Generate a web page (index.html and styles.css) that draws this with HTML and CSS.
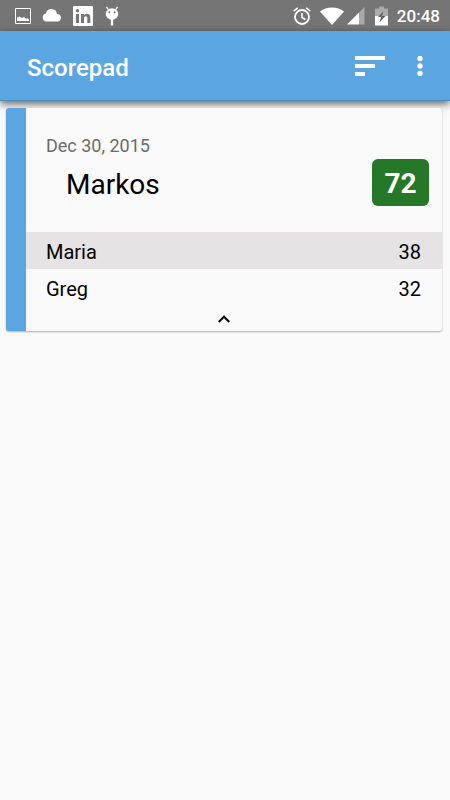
FILE: index.html
```html
<!DOCTYPE html>
<html lang="en">
<head>
<meta charset="utf-8">
<meta name="viewport" content="width=device-width, initial-scale=1">
<title>Scorepad</title>
<link rel="stylesheet" href="styles.css">
</head>
<body>
<div class="status-bar">
  <div class="notifications">
    <svg width="16" height="16" viewBox="0 0 16 16" aria-hidden="true"><path fill="none" stroke="#fff" d="M.5.5h15v15H.5z"/><path fill="#fff" d="M2 13V9.500L4.500 8.500 7 10l2-1 2 1.500h2l1 1V13z"/></svg>
    <svg width="20" height="20" viewBox="0 0 20 20" aria-hidden="true"><path fill="#fff" d="M4.500 15.500a4 4 0 0 1-.6-7.900A5.600 5.600 0 0 1 15 8a3.800 3.800 0 0 1 1 7.500z"/></svg>
    <svg width="20" height="20" viewBox="0 0 20 20" aria-hidden="true"><rect width="20" height="20" rx="1" fill="#fff"/><path fill="#757575" d="M3 8h3v9H3zM8 8h3v1.400c.6-1 1.600-1.600 3-1.600 2.400 0 3.300 1.500 3.300 4V17h-3v-4.600c0-1.400-.3-2.200-1.500-2.200S11 11.100 11 12.400V17H8z"/><circle cx="4.500" cy="4.800" r="1.700" fill="#757575"/></svg>
    <svg width="16" height="20" viewBox="0 0 16 20" aria-hidden="true"><path fill="none" stroke="#fff" stroke-width="1.300" d="M2.500.8 4.500 4M13.500.8 11.500 4"/><ellipse cx="8" cy="8" rx="6.300" ry="5.800" fill="#fff"/><path fill="#fff" d="M6.800 13h2.400v6.500H6.800z"/><circle cx="5.300" cy="6.200" r="1" fill="#757575"/><circle cx="10.700" cy="6.200" r="1" fill="#757575"/></svg>
  </div>
  <div class="system">
    <svg width="18" height="18" viewBox="0 0 18 18" aria-hidden="true"><g fill="none" stroke="#fff"><circle cx="9" cy="10" r="7" stroke-width="1.800"/><path stroke-width="1.600" d="M9 6v4.500l3.300 2M.6 4.200 4.800.8M13.200.8l4.200 3.400"/></g></svg>
    <svg class="wifi" width="24" height="18" viewBox="0 0 24 18" aria-hidden="true"><path fill="#fff" d="M0 4.500Q5 .5 12 .5t12 4L12 18z"/></svg>
    <svg width="18" height="18" viewBox="0 0 18 18" aria-hidden="true"><path fill="#aaa" d="M12 5.500 17.500 0v17.500H12z"/><path fill="#fff" d="M0 17.500 12 5.500v12z"/></svg>
    <svg class="battery" width="13" height="20" viewBox="0 0 13 20" aria-hidden="true"><path fill="#aaa" d="M0 2.500h4V.5h5v2h4V10H0z"/><path fill="#fff" d="M0 10h13v9.500H0z"/><path fill="#666" d="M8.500 5 3 11h3L4.500 16.500l6-6.500H7.200z"/></svg>
    <time class="clock">20:48</time>
  </div>
</div>
<header class="app-bar">
  <h1 class="title">Scorepad</h1>
  <button class="icon-button sort" type="button" aria-label="Sort"><svg width="30" height="20" viewBox="0 0 30 20"><path fill="#fff" d="M0 0h30v4H0zM0 8h20v4H0zM0 16h10v4H0z"/></svg></button>
  <button class="icon-button more" type="button" aria-label="More options"><svg width="6" height="20" viewBox="0 0 6 20"><g fill="#fff"><circle cx="3" cy="2.500" r="2.700"/><circle cx="3" cy="10" r="2.700"/><circle cx="3" cy="17.500" r="2.700"/></g></svg></button>
</header>
<main class="content">
  <article class="card">
    <div class="summary">
      <time class="date" datetime="2015-12-30">Dec 30, 2015</time>
      <div class="leader">
        <h2 class="name">Markos</h2>
        <span class="badge">72</span>
      </div>
    </div>
    <table class="scores">
      <tbody>
        <tr><th scope="row">Maria</th><td>38</td></tr>
        <tr><th scope="row">Greg</th><td>32</td></tr>
      </tbody>
    </table>
    <button class="collapse" type="button" aria-label="Collapse"><svg width="12" height="8" viewBox="0 0 12 8"><path fill="none" stroke="#000" stroke-width="2" d="M.7 7 6 1.700 11.300 7"/></svg></button>
  </article>
</main>
</body>
</html>
```
FILE: styles.css
```css
* { box-sizing: border-box; }
body {
  margin: 0;
  background: #fafafa;
  color: #000;
  font-family: Roboto, "Liberation Sans", sans-serif;
}
svg { display: block; flex: none; }
button { border: 0; padding: 0; background: none; cursor: pointer; }
h1, h2 { margin: 0; }

.status-bar {
  display: flex;
  justify-content: space-between;
  height: 31px;
  padding: 0 10px 0 15px;
  background: #757575;
  color: #fff;
}
.notifications, .system { display: flex; align-items: center; }
.notifications { gap: 11px; }
.system { gap: 3px; }
.wifi { margin-left: 6px; }
.battery { margin: 0 6px 0 7px; }
.clock { padding-top: 2px; font-size: 17px; font-weight: 500; line-height: 29px; }

.app-bar {
  display: flex;
  align-items: center;
  height: 70px;
  padding: 0 21px 0 27px;
  background: #5ba6e1;
  border-bottom: 1px solid #4c8cbc;
  box-shadow: 0 3px 8px rgba(0, 0, 0, 0.6);
  color: #fff;
}
.title { flex: 1; padding-top: 4px; font-size: 24px; font-weight: 500; line-height: 32px; }
.icon-button { display: flex; align-items: center; justify-content: center; height: 48px; }
.sort { width: 30px; margin-right: 26px; }
.more { width: 18px; }

.content { padding: 7px 8px 7px 6px; }
.card {
  border-left: 20px solid #5ba6e1;
  border-radius: 3px;
  background: #fafafa;
  box-shadow: 0 1px 2px rgba(0, 0, 0, 0.3);
}
.summary { padding: 26px 13px 25px 20px; }
.date { display: block; color: #6b6b6b; font-size: 18px; line-height: 24px; }
.leader { display: flex; align-items: center; justify-content: space-between; padding-left: 20px; }
.name { padding-top: 5px; font-size: 28px; font-weight: 400; line-height: 44px; }
.badge {
  width: 57px;
  padding-top: 3px;
  border-radius: 6px;
  background: #267829;
  color: #fff;
  font-size: 28px;
  font-weight: 700;
  line-height: 44px;
  text-align: center;
}

.scores { width: 100%; border-collapse: collapse; font-size: 20px; line-height: 34px; }
.scores th, .scores td { padding: 3px 20px 0; font-weight: 400; text-align: left; }
.scores td { padding-right: 21px; text-align: right; }
.scores tr:first-child { background: #e5e3e4; }
.collapse { display: flex; align-items: center; justify-content: center; width: 100%; height: 25px; padding-right: 20px; }
```
